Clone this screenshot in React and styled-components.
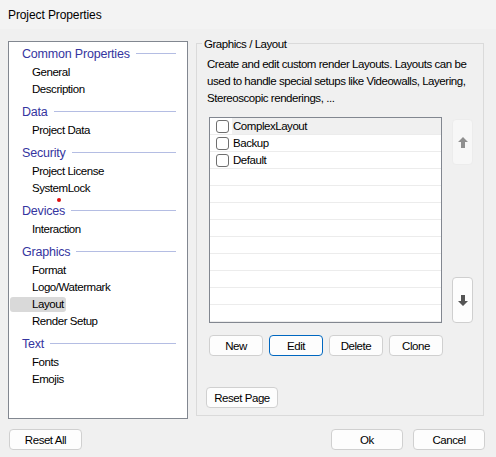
import React from 'react'
import styled, { createGlobalStyle } from 'styled-components'

const GlobalStyle = createGlobalStyle`
    html, body {
        margin:0;
        padding:0;
        background:#f0f0f0;
    }
    body {
        font-family:"Liberation Sans", Arial, sans-serif;
        font-size:11.5px;
        letter-spacing:-0.45px;
        color:#000;
    }
`

const Window = styled.div`
    width:496px;
    height:457px;
    display:flex;
    flex-direction:column;
    background:#f0f0f0;
    overflow:hidden;
`

const TitleBar = styled.div`
    height:29px;
    display:flex;
    align-items:center;
    padding-left:8px;
    background:#f3f3f3;
    font-size:12px;
    letter-spacing:-0.1px;
`

const Content = styled.div`
    display:flex;
    padding:12px 0 0 8px;
    height:377px;
`

const Tree = styled.div`
    position:relative;
    width:178px;
    height:375px;
    background:#fff;
    border:1px solid #828790;
    padding-top:1px;
    box-sizing:content-box;
`

const Group = styled.div`
    margin-top:3px;
    &:first-child { margin-top:0; }
`

const Header = styled.div`
    display:flex;
    align-items:center;
    height:21px;
    padding-left:13px;
    color:#3535a0;
    font-size:12.5px;
    letter-spacing:-0.2px;
`

const HeaderLine = styled.div`
    flex:1;
    height:1px;
    background:#b4bde3;
    margin:0 11px 0 6px;
`

const ItemRow = styled.div`
    height:17px;
    display:flex;
    align-items:center;
`

const Item = styled.div`
    margin-left:1px;
    padding:0 2px 0 22px;
    height:15px;
    line-height:15px;
    border-radius:3px;
    background:${p => (p.$selected ? '#d9d9d9' : 'transparent')};
`

const Dot = styled.div`
    position:absolute;
    left:48px;
    top:156px;
    width:4px;
    height:4px;
    border-radius:50%;
    background:#e01010;
`

const GroupBox = styled.div`
    position:relative;
    margin:2px 0 0 8px;
    width:288px;
    height:373px;
    border:1px solid #dadada;
    display:flex;
    flex-direction:column;
    padding:0 0 7px 12px;
    box-sizing:border-box;
`

const Caption = styled.div`
    position:absolute;
    top:-8px;
    left:5px;
    padding:0 2px;
    background:#f0f0f0;
    line-height:16px;
`

const Description = styled.div`
    margin:12px 0 0 -2px;
    line-height:17px;
    width:270px;
`

const ListRow = styled.div`
    display:flex;
    margin-top:10px;
    gap:10px;
`

const List = styled.div`
    width:231px;
    height:204px;
    background:#fff;
    border:1px solid #828790;
    overflow:hidden;
`

const Row = styled.div`
    height:16px;
    display:flex;
    align-items:center;
    border-bottom:1px solid #ececec;
`

const CheckCell = styled.div`
    width:20px;
    display:flex;
    justify-content:center;
    padding-left:2px;
`

const Check = styled.span`
    width:11px;
    height:11px;
    border:1px solid #6f6f6f;
    border-radius:3px;
    background:#fff;
`

const RowLabel = styled.div`
    flex:1;
    height:16px;
    line-height:16px;
    padding-left:1px;
    background:${p => (p.$active ? '#f0f0f0' : 'transparent')};
`

const SideButtons = styled.div`
    display:flex;
    flex-direction:column;
    justify-content:space-between;
    padding-top:2px;
`

const ArrowButton = styled.div`
    width:19px;
    height:44px;
    border:1px solid ${p => (p.$disabled ? '#ececec' : '#cfcfcf')};
    border-radius:4px;
    background:${p => (p.$disabled ? '#f7f7f7' : '#fdfdfd')};
    display:flex;
    align-items:center;
    justify-content:center;
    color:${p => (p.$disabled ? '#8f8f8f' : '#555')};
`

const ActionRow = styled.div`
    display:flex;
    gap:6px;
    margin-top:12px;
`

const Button = styled.div`
    width:${p => p.$w || 52}px;
    height:19px;
    border:1px solid ${p => (p.$focus ? '#0067c0' : '#d0d0d0')};
    border-radius:4px;
    background:#fdfdfd;
    display:flex;
    align-items:center;
    justify-content:center;
`

const ResetPage = styled(Button)`
    margin-top:auto;
    margin-left:-3px;
`

const Footer = styled.div`
    display:flex;
    align-items:center;
    padding:11px 11px 0 9px;
`

const Spacer = styled.div`
    flex:1;
`

const FooterButtons = styled.div`
    display:flex;
    gap:10px;
`

const tree = [
    { title: 'Common Properties', items: ['General', 'Description'] },
    { title: 'Data', items: ['Project Data'] },
    { title: 'Security', items: ['Project License', 'SystemLock'] },
    { title: 'Devices', items: ['Interaction'] },
    { title: 'Graphics', items: ['Format', 'Logo/Watermark', 'Layout', 'Render Setup'] },
    { title: 'Text', items: ['Fonts', 'Emojis'] },
]

const layouts = ['ComplexLayout', 'Backup', 'Default']

const Arrow = ({ down }) => (
    <svg width="10" height="11" viewBox="0 0 10 11" style={{ transform: down ? 'rotate(180deg)' : 'none' }}>
        <path d="M5 0 L10 5 H7 V11 H3 V5 H0 Z" fill="currentColor" />
    </svg>
)

function App() {
    const rows = [...layouts]
    while (rows.length < 12) rows.push(null)
    return (
        <Window>
            <GlobalStyle />
            <TitleBar>Project Properties</TitleBar>
            <Content>
                <Tree>
                    {tree.map(g => (
                        <Group key={g.title}>
                            <Header>
                                {g.title}
                                <HeaderLine />
                            </Header>
                            {g.items.map(i => (
                                <ItemRow key={i}>
                                    <Item $selected={i === 'Layout'}>{i}</Item>
                                </ItemRow>
                            ))}
                        </Group>
                    ))}
                    <Dot />
                </Tree>
                <GroupBox>
                    <Caption>Graphics / Layout</Caption>
                    <Description>
                        Create and edit custom render Layouts. Layouts can be used to handle special setups like Videowalls, Layering, Stereoscopic renderings, ...
                    </Description>
                    <ListRow>
                        <List>
                            {rows.map((r, idx) => (
                                <Row key={idx}>
                                    {r ? (
                                        <>
                                            <CheckCell><Check /></CheckCell>
                                            <RowLabel $active={idx === 0}>{r}</RowLabel>
                                        </>
                                    ) : null}
                                </Row>
                            ))}
                        </List>
                        <SideButtons>
                            <ArrowButton $disabled><Arrow /></ArrowButton>
                            <ArrowButton><Arrow down /></ArrowButton>
                        </SideButtons>
                    </ListRow>
                    <ActionRow>
                        <Button>New</Button>
                        <Button $focus>Edit</Button>
                        <Button>Delete</Button>
                        <Button>Clone</Button>
                    </ActionRow>
                    <ResetPage $w={70}>Reset Page</ResetPage>
                </GroupBox>
            </Content>
            <Footer>
                <Button $w={71}>Reset All</Button>
                <Spacer />
                <FooterButtons>
                    <Button $w={70}>Ok</Button>
                    <Button $w={70}>Cancel</Button>
                </FooterButtons>
            </Footer>
        </Window>
    )
}

export default App
